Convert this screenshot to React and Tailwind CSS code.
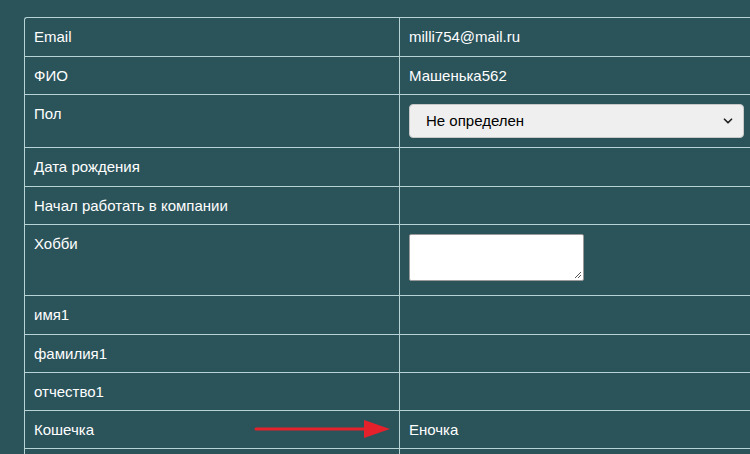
import { ChevronDown } from "lucide-react";

const rows = [
  { label: "Email", value: "milli754@mail.ru", h: "h-[39px]" },
  { label: "ФИО", value: "Машенька562", h: "h-[38px]" },
  { label: "Пол", select: true, h: "h-[53px]" },
  { label: "Дата рождения", h: "h-[39px]" },
  { label: "Начал работать в компании", h: "h-[38px]" },
  { label: "Хобби", textarea: true, h: "h-[71px]" },
  { label: "имя1", h: "h-[39px]" },
  { label: "фамилия1", h: "h-[38px]" },
  { label: "отчество1", h: "h-[38px]" },
  { label: "Кошечка", value: "Еночка", arrow: true, h: "h-[38px]" },
  { label: "", h: "h-[38px]" },
];

export default function App() {
  return (
    <div
      className="w-[750px] h-[454px] overflow-hidden bg-[#2b535a] text-white text-[15px] leading-5"
      style={{ fontFamily: '"Liberation Sans", Arial, sans-serif' }}
    >
      <div className="pt-[17px] pl-[24px]">
        <div className="w-[730px] border-l border-t border-[#b8d3d6] rounded-tl-[3px]">
          {rows.map((r, i) => (
            <div key={i} className={`flex border-b border-[#b8d3d6] ${r.h}`}>
              <div className="relative w-[375px] shrink-0 border-r border-[#b8d3d6] pl-[9px] pt-[9px]">
                {r.label}
                {r.arrow && (
                  <svg className="absolute left-[229px] top-[7px]" width="140" height="24" viewBox="0 0 140 24">
                    <line x1="2" y1="11" x2="116" y2="11" stroke="#e5212b" strokeWidth="3" strokeLinecap="round" />
                    <polygon points="110,2 136,11 110,20" fill="#e5212b" />
                  </svg>
                )}
              </div>
              <div className="w-[355px] shrink-0 pl-[9px] pt-[9px]">
                {r.value}
                {r.select && (
                  <div className="flex items-center justify-between w-[335px] h-[34px] rounded-[4px] bg-[#efefef] border border-[#c8c8c8] text-black pl-[16px] pr-[8px]">
                    <span>Не определен</span>
                    <ChevronDown size={14} strokeWidth={3} className="text-[#222]" />
                  </div>
                )}
                {r.textarea && (
                  <div className="relative w-[175px] h-[47px] rounded-[2px] bg-white border border-[#9a9a9a]">
                    <svg className="absolute right-[1px] bottom-[1px]" width="8" height="8" viewBox="0 0 8 8">
                      <line x1="7" y1="1" x2="1" y2="7" stroke="#555" strokeWidth="1" />
                      <line x1="7" y1="4" x2="4" y2="7" stroke="#555" strokeWidth="1" />
                    </svg>
                  </div>
                )}
              </div>
            </div>
          ))}
        </div>
      </div>
    </div>
  );
}
